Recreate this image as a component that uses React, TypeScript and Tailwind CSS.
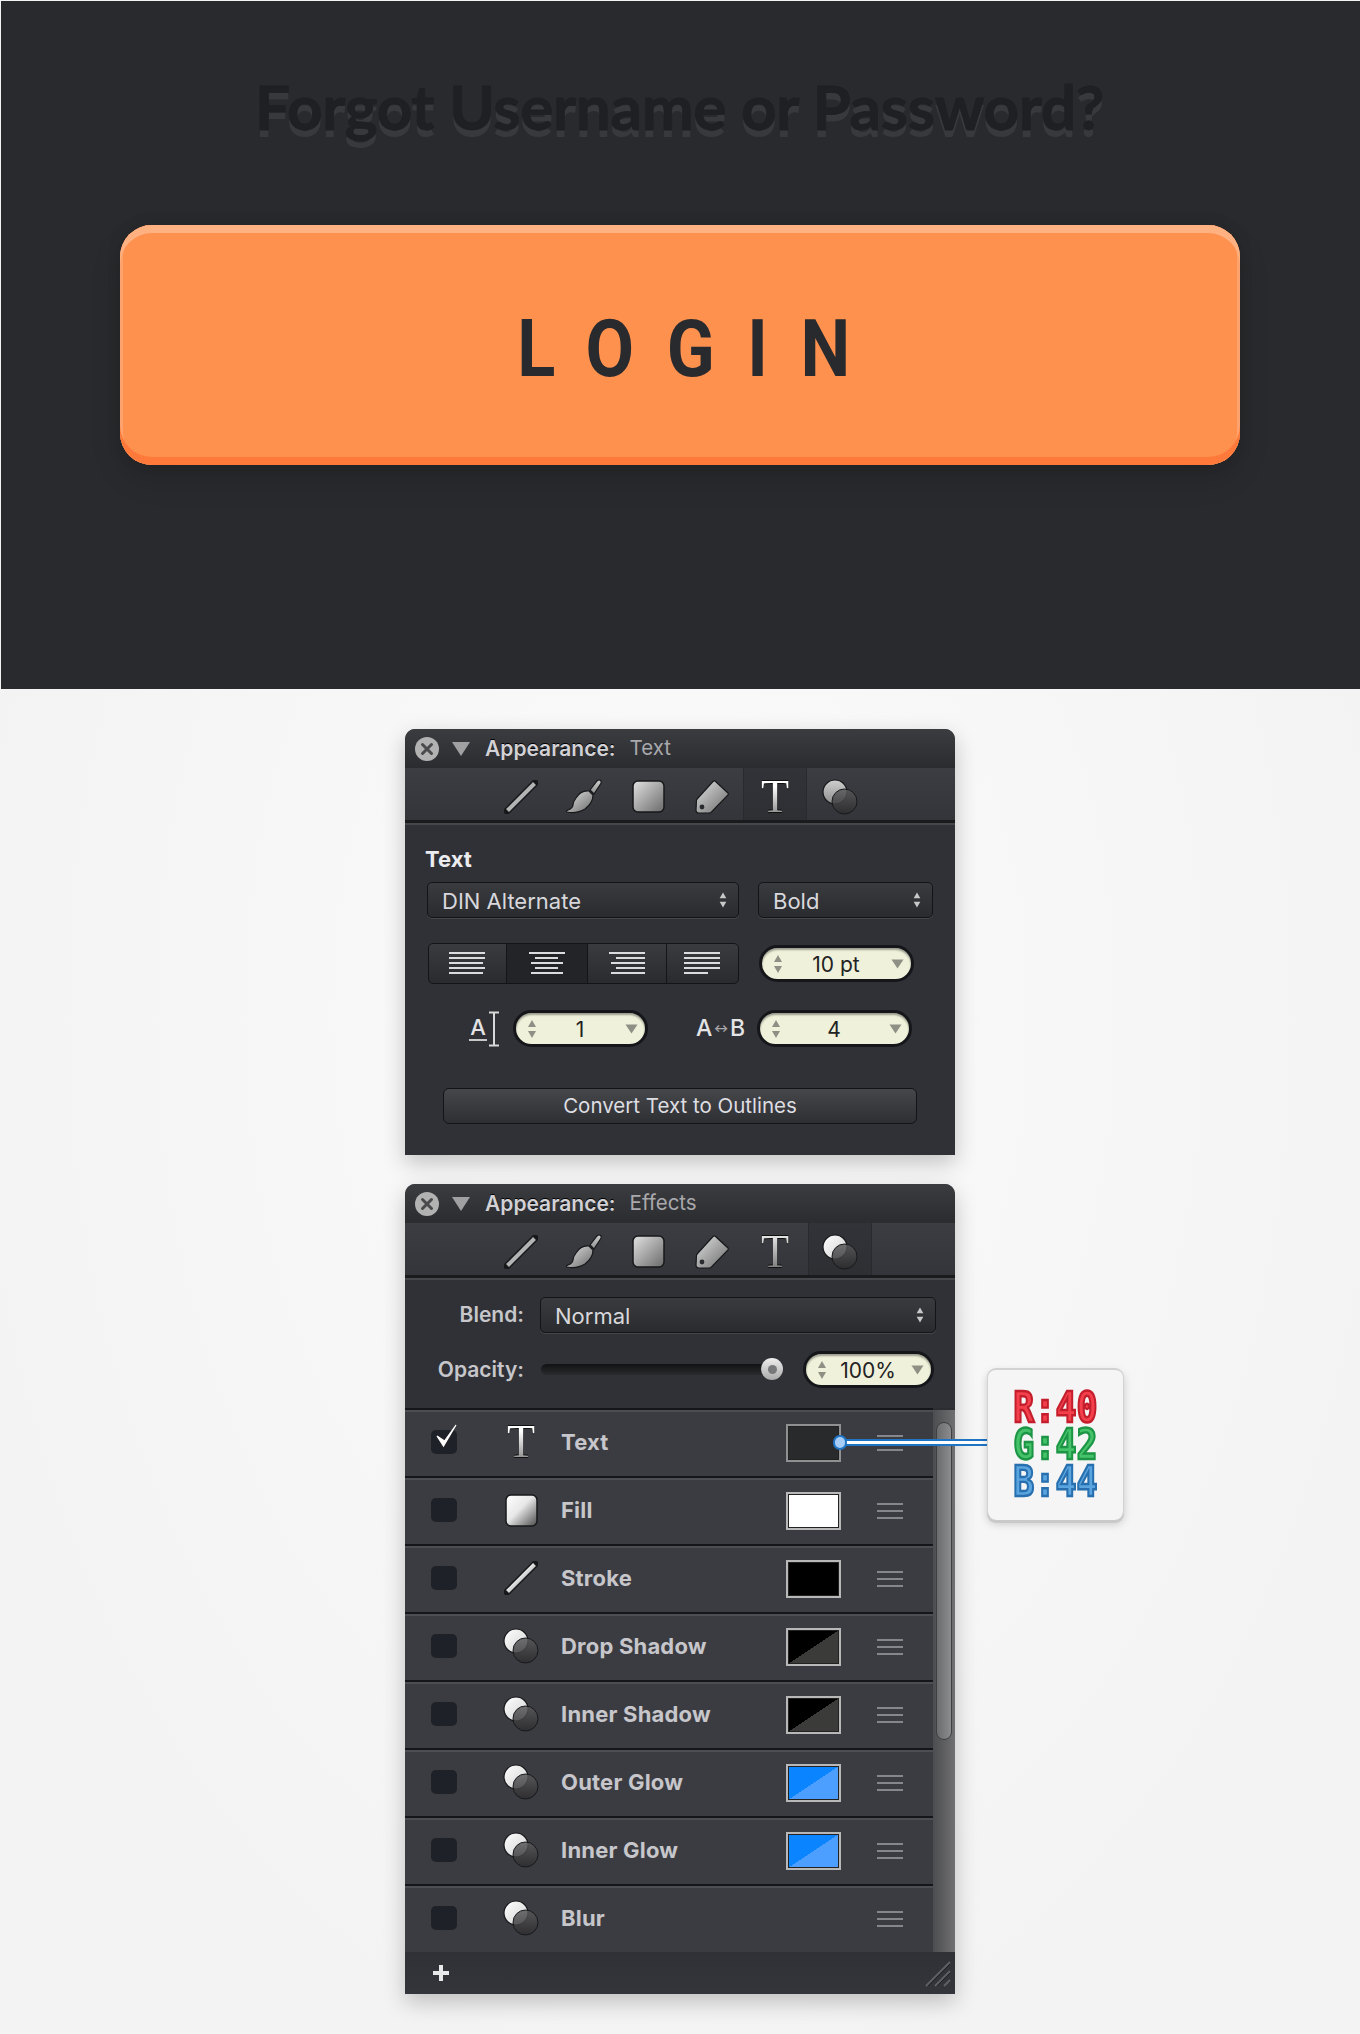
import React from "react";

const ui = "font-['Inter','Liberation_Sans',sans-serif]";

function Defs() {
  return (
    <svg className="absolute w-0 h-0">
      <defs>
        <linearGradient id="g1" x1="0" y1="0" x2="1" y2="1">
          <stop offset="0" stopColor="#e2e2e2" />
          <stop offset="1" stopColor="#6a6a6a" />
        </linearGradient>
        <linearGradient id="g2" x1="0" y1="0" x2="1" y2="1">
          <stop offset="0" stopColor="#ffffff" />
          <stop offset="0.45" stopColor="#e8e8e8" />
          <stop offset="1" stopColor="#4a4a4a" />
        </linearGradient>
        <linearGradient id="g3" x1="0" y1="0" x2="0" y2="1">
          <stop offset="0" stopColor="#cfcfcf" />
          <stop offset="1" stopColor="#8d8d8d" />
        </linearGradient>
        <linearGradient id="g4" x1="0" y1="0" x2="1" y2="1">
          <stop offset="0" stopColor="#ffffff" />
          <stop offset="1" stopColor="#d0d0d0" />
        </linearGradient>
        <linearGradient id="g5" x1="0" y1="0" x2="0" y2="1">
          <stop offset="0" stopColor="#5a5a5c" />
          <stop offset="1" stopColor="#2c2c2e" />
        </linearGradient>
      </defs>
    </svg>
  );
}

function LineIcon({ bright = false }: { bright?: boolean }) {
  return (
    <svg width="34" height="34" viewBox="0 0 34 34" className="block">
      <line x1="3" y1="31" x2="31" y2="3" stroke="#17181a" strokeWidth="7" strokeLinecap="round" />
      <line x1="3.5" y1="30.5" x2="30.5" y2="3.5" stroke={bright ? "url(#g2)" : "#b4b4b4"} strokeWidth="4" />
    </svg>
  );
}

function BrushIcon() {
  return (
    <svg width="36" height="36" viewBox="0 0 36 36" className="block">
      <path d="M24 11 L31 2 Q33 0 34.5 1.5 Q36 3 34.5 5 L28 15 Z" fill="url(#g3)" stroke="#17181a" strokeWidth="1.2" />
      <path d="M10 19 Q15 11 23 12 L27 16 Q27 24 19 30 Q11 35 1 33 Q-0.5 32 2 31 Q7 29 7 26 Q7 23 10 19Z" fill="url(#g1)" stroke="#17181a" strokeWidth="1.2" />
    </svg>
  );
}

function SquareIcon({ bright = false, w = 33 }: { bright?: boolean; w?: number }) {
  return (
    <svg width={w} height="33" viewBox={`0 0 ${w} 33`} className="block">
      <rect x="1" y="1" width={w - 2} height="31" rx="5" fill={bright ? "url(#g2)" : "url(#g1)"} stroke="#17181a" strokeWidth="1.5" />
    </svg>
  );
}

function TagIcon() {
  return (
    <svg width="34" height="34" viewBox="0 0 34 34" className="block">
      <path d="M20 1 L33 13 Q33.6 14 33 15 L16 32.5 Q15 33 14 33 L4 33 Q1 33 1 30 L1.5 20 Q2 19 3 18 L18 1.5 Q19 0.7 20 1Z" fill="url(#g1)" stroke="#17181a" strokeWidth="1.2" />
      <circle cx="7" cy="27" r="2.4" fill="#2a2b2e" />
    </svg>
  );
}

function TIcon({ bright = false }: { bright?: boolean }) {
  return (
    <span
      className={`block w-[32px] text-center font-['Liberation_Serif',serif] text-[46px] leading-[36px] bg-clip-text text-transparent [filter:drop-shadow(0_1px_0_#111)_drop-shadow(0_-1px_0_#111)] ${
        bright
          ? "bg-[linear-gradient(to_bottom,#ffffff_20%,#8a8a8a_100%)]"
          : "bg-[linear-gradient(to_bottom,#e0e0e0_10%,#777_100%)]"
      }`}
    >
      T
    </span>
  );
}

function CirclesIcon({ bright = false, size = 36 }: { bright?: boolean; size?: number }) {
  return (
    <svg width={size} height={size} viewBox="0 0 36 36" className="block">
      <circle cx="13" cy="13" r="12" fill={bright ? "url(#g4)" : "url(#g3)"} stroke="#17181a" strokeWidth="1.2" />
      <circle cx="22.5" cy="22.5" r="12.5" fill="url(#g5)" fillOpacity="0.85" stroke="#17181a" strokeWidth="1" />
    </svg>
  );
}

function Updown({ color = "#c8c8c8", small = false }: { color?: string; small?: boolean }) {
  return (
    <svg width={small ? 10 : 12} height={small ? 20 : 22} viewBox="0 0 12 22" className="block shrink-0">
      <path d="M6 2 L10 9 L2 9Z" fill={color} />
      <path d="M6 20 L10 13 L2 13Z" fill={color} />
    </svg>
  );
}

function TitleBar({ name }: { name: string }) {
  return (
    <div className="h-[39px] flex items-center bg-[linear-gradient(to_bottom,#3b3c40,#2b2c2f)] rounded-t-[10px] pl-[10px]">
      <div className="w-[24px] h-[24px] rounded-full bg-[#b2b2b2] flex items-center justify-center">
        <svg width="14" height="14" viewBox="0 0 14 14">
          <path d="M2.5 2.5 L11.5 11.5 M11.5 2.5 L2.5 11.5" stroke="#4a4a4c" strokeWidth="3" strokeLinecap="round" />
        </svg>
      </div>
      <svg width="18" height="16" viewBox="0 0 18 16" className="ml-[13px]">
        <path d="M0 1 L18 1 L9 15Z" fill="#a0a0a2" />
      </svg>
      <span className="ml-[15px] text-[21px] font-semibold text-[#d2d2d6] [text-shadow:0_-1px_0_#000]">Appearance:</span>
      <span className="ml-[14px] text-[20.5px] text-[#a9a9ad]">{name}</span>
    </div>
  );
}

function Toolbar({ active }: { active: "T" | "fx" }) {
  const tab = "w-[64px] h-full flex items-center justify-center pt-[5px]";
  const on = "bg-[linear-gradient(to_bottom,#323338,#2e2f33)] border-x border-[#292a2d]";
  return (
    <div className="h-[55px] flex bg-[linear-gradient(to_bottom,#3c3d42,#34353a)] border-b-[3px] border-[#1a1b1d] shadow-[0_2px_0_#46474b]">
      <div className="ml-[84px] flex items-center h-full">
        <div className="w-[64px] pt-[5px] flex justify-center"><LineIcon /></div>
        <div className="w-[62px] pt-[5px] flex justify-center"><BrushIcon /></div>
        <div className="w-[66px] pt-[5px] flex justify-center"><SquareIcon /></div>
        <div className="w-[62px] pt-[5px] flex justify-center"><TagIcon /></div>
        <div className={`${tab} ${active === "T" ? on : ""}`}><TIcon bright={active === "T"} /></div>
        <div className={`${tab} ml-px ${active === "fx" ? on : ""}`}><CirclesIcon bright={active === "fx"} /></div>
      </div>
    </div>
  );
}

function Select({ label, className = "" }: { label: string; className?: string }) {
  return (
    <div className={`h-[36px] flex items-center justify-between pl-[14px] pr-[10px] rounded-[5px] border border-[#131416] bg-[linear-gradient(to_bottom,#3a3b3f,#2a2b2e)] shadow-[0_1px_0_#46474b] ${className}`}>
      <span className="text-[22px] text-[#d8d8dc] leading-none pt-[2px]">{label}</span>
      <Updown small />
    </div>
  );
}

function Stepper({ value, className = "" }: { value: string; className?: string }) {
  return (
    <div className={`relative h-[37px] flex items-center rounded-full border-[3px] border-[#15161a] bg-[#eff1da] shadow-[inset_0_2px_2px_rgba(0,0,0,0.35)] pl-[10px] pr-[7px] ${className}`}>
      <Updown color="#8f9085" />
      <span className="flex-1 text-center text-[21px] text-[#222] leading-none pt-[1px] pr-[3px]">{value}</span>
      <svg width="13" height="10" viewBox="0 0 13 10" className="block shrink-0">
        <path d="M0.5 0.5 L12.5 0.5 L6.5 9.5Z" fill="#8f9085" />
      </svg>
    </div>
  );
}

const alignLines: Record<string, [number, number][]> = {
  left: [[0, 36], [0, 36], [0, 34], [0, 36], [0, 34]],
  center: [[1, 36], [7, 23], [3, 32], [7, 23], [3, 32]],
  right: [[0, 36], [7, 29], [2, 34], [7, 29], [2, 34]],
  just: [[0, 36], [0, 36], [0, 36], [0, 36], [0, 24]],
};

function AlignIcon({ kind }: { kind: string }) {
  return (
    <svg width="37" height="25" viewBox="0 0 37 25" className="block">
      {alignLines[kind].map(([x, w], i) => (
        <rect key={i} x={x} y={i * 5 + 1} width={w} height="2" fill="#dcdcde" />
      ))}
    </svg>
  );
}

function Segments() {
  const kinds = ["left", "center", "right", "just"];
  const widths = ["w-[78px]", "w-[82px]", "w-[80px]", "w-[71px]"];
  return (
    <div className="h-[41px] w-[311px] flex rounded-[5px] border border-[#131416] bg-[linear-gradient(to_bottom,#3a3b3f,#2a2b2e)] overflow-hidden">
      {kinds.map((k, i) => (
        <div
          key={k}
          className={`${widths[i]} flex items-center justify-center ${i < 3 ? "border-r border-[#141517]" : ""} ${i === 1 ? "bg-[#232427]" : ""}`}
        >
          <AlignIcon kind={k} />
        </div>
      ))}
    </div>
  );
}

function LeadingIcon() {
  return (
    <div className="w-[32px] h-[36px] flex items-center">
      <div className="flex flex-col items-center w-[20px]">
        <span className="text-[22px] leading-[23px] font-medium text-[#e4e4e6]">A</span>
        <div className="w-[18px] h-[2px] bg-[#c8c8c8]" />
      </div>
      <svg width="12" height="36" viewBox="0 0 12 36" className="block">
        <path d="M1 1.5 H11 M1 34.5 H11 M6 1.5 V34.5" stroke="#d8d8d8" strokeWidth="2" fill="none" />
      </svg>
    </div>
  );
}

function TextPanel() {
  return (
    <section className="w-[550px] ml-[405px] mt-[40px] rounded-t-[10px] bg-[#303136] shadow-[0_8px_22px_rgba(0,0,0,0.22)]">
      <TitleBar name="Text" />
      <Toolbar active="T" />
      <div className="pt-[24px] pb-[31px]">
        <div className="ml-[20px] text-[22px] leading-[24px] font-bold text-[#ececf0]">Text</div>
        <div className="mt-[11px] ml-[22px] flex gap-[19px]">
          <Select label="DIN Alternate" className="w-[312px]" />
          <Select label="Bold" className="w-[175px]" />
        </div>
        <div className="mt-[25px] ml-[23px] flex items-center gap-[20px]">
          <Segments />
          <Stepper value="10 pt" className="w-[155px]" />
        </div>
        <div className="mt-[26px] ml-[63px] flex items-center">
          <LeadingIcon />
          <Stepper value="1" className="ml-[13px] w-[135px] h-[37px]" />
          <div className="ml-[48px] w-[49px] flex items-center justify-between text-[23px] font-medium text-[#e4e4e6] leading-none">
            <span>A</span>
            <span className="text-[11px] font-bold text-[#a8a8aa]">↔</span>
            <span>B</span>
          </div>
          <Stepper value="4" className="ml-[12px] w-[155px]" />
        </div>
        <div className="mt-[41px] ml-[38px] w-[474px] h-[36px] flex items-center justify-center rounded-[6px] border border-[#131416] bg-[linear-gradient(to_bottom,#46474b,#2e2f33)] text-[20.5px] text-[#dedee2]">
          Convert Text to Outlines
        </div>
      </div>
    </section>
  );
}

type Row = { label: string; icon: React.ReactNode; swatch?: string; check?: boolean };

const half = (a: string, b: string) => ({ backgroundImage: `linear-gradient(to bottom right, ${a} 50%, ${b} 50%)` });

function Swatch({ kind }: { kind: string }) {
  const base = "w-[55px] h-[38px] border-2 shadow-[inset_0_0_0_1px_#222]";
  if (kind === "text") return <div className={`${base} border-[#909092] bg-[#292a2c]`} />;
  if (kind === "white") return <div className={`${base} border-[#b8b8b8] bg-white`} />;
  if (kind === "black") return <div className={`${base} border-[#b8b8b8] bg-black`} />;
  if (kind === "shadow") return <div className={`${base} border-[#b8b8b8]`} style={half("#000", "#3b3b39")} />;
  return <div className={`${base} border-[#b8b8b8]`} style={half("#0a84ff", "#4c9eff")} />;
}

const rows: Row[] = [
  { label: "Text", icon: <TIcon bright />, swatch: "text", check: true },
  { label: "Fill", icon: <SquareIcon bright />, swatch: "white" },
  { label: "Stroke", icon: <LineIcon bright />, swatch: "black" },
  { label: "Drop Shadow", icon: <CirclesIcon bright />, swatch: "shadow" },
  { label: "Inner Shadow", icon: <CirclesIcon bright />, swatch: "shadow" },
  { label: "Outer Glow", icon: <CirclesIcon bright />, swatch: "blue" },
  { label: "Inner Glow", icon: <CirclesIcon bright />, swatch: "blue" },
  { label: "Blur", icon: <CirclesIcon bright /> },
];

function EffectRow({ row }: { row: Row }) {
  return (
    <div className="h-[68px] flex items-center bg-[#3b3c41] border-t-2 border-[#15161a] shadow-[inset_0_2px_0_#4d4e53] pl-[26px] pr-[30px]">
      <div className="relative w-[26px] h-[24px] rounded-[5px] bg-[#1f2128] -mt-[2px]">
        {row.check && (
          <svg width="24" height="32" viewBox="0 0 24 32" className="absolute left-[3px] top-[-9px]">
            <path d="M3 15 L9.5 25 L22 4 L10.5 20 Z" fill="#fff" stroke="#fff" strokeWidth="1.2" />
          </svg>
        )}
      </div>
      <div className="ml-[46px] w-[36px] flex justify-center -mt-[2px]">{row.icon}</div>
      <span className="ml-[22px] flex-1 text-[22px] font-bold tracking-[0.2px] text-[#c6c6cb] -mt-[2px]">{row.label}</span>
      {row.swatch && <Swatch kind={row.swatch} />}
      <div className="ml-[36px] w-[26px] flex flex-col gap-[5px]">
        <div className="h-[2px] bg-[#87878b]" />
        <div className="h-[2px] bg-[#87878b]" />
        <div className="h-[2px] bg-[#87878b]" />
      </div>
    </div>
  );
}

function EffectsPanel() {
  return (
    <section className="w-[550px] ml-[405px] mt-[29px] rounded-t-[10px] bg-[#303136] shadow-[0_8px_22px_rgba(0,0,0,0.22)]">
      <TitleBar name="Effects" />
      <Toolbar active="fx" />
      <div className="pt-[19px] pb-[20px]">
        <div className="flex items-center">
          <span className="w-[119px] text-right text-[21px] font-semibold text-[#c6c6cb]">Blend:</span>
          <Select label="Normal" className="ml-[16px] w-[396px]" />
        </div>
        <div className="mt-[18px] flex items-center">
          <span className="w-[119px] text-right text-[21px] font-semibold text-[#c6c6cb]">Opacity:</span>
          <div className="relative ml-[17px] w-[242px] h-[11px] rounded-full bg-[linear-gradient(to_bottom,#111214,#2a2b2d)]">
            <div className="absolute right-0 top-[-6px] w-[22px] h-[22px] rounded-full bg-[linear-gradient(to_bottom,#eee,#aaa)] flex items-center justify-center">
              <div className="w-[9px] h-[9px] rounded-full bg-[#77787a]" />
            </div>
          </div>
          <Stepper value="100%" className="ml-[20px] w-[131px] h-[37px]" />
        </div>
      </div>
      <div className="flex">
        <div className="w-[528px]">
          {rows.map((r) => (
            <EffectRow key={r.label} row={r} />
          ))}
        </div>
        <div className="w-[22px] pt-[12px] bg-[linear-gradient(to_right,#4c4d50,#707072)] border-t-2 border-[#2c2d30]">
          <div className="ml-[3px] w-[16px] h-[318px] rounded-full bg-[linear-gradient(to_right,#6b6c6e,#8c8c8e)] border border-[#3f4042]" />
        </div>
      </div>
      <div className="h-[42px] flex items-center justify-between bg-[linear-gradient(to_bottom,#303136,#34353a)] pl-[28px] pr-[4px]">
        <svg width="16" height="16" viewBox="0 0 16 16">
          <path d="M8 0 V16 M0 8 H16" stroke="#e8e8ea" strokeWidth="4" />
        </svg>
        <svg width="26" height="26" viewBox="0 0 26 26" className="mt-[2px]">
          <path d="M1 25 L25 1 M10 25 L25 10 M19 25 L25 19" stroke="#5e5f63" strokeWidth="2" />
          <path d="M3 25 L25 3 M12 25 L25 12" stroke="#1e1f22" strokeWidth="1" />
        </svg>
      </div>
    </section>
  );
}

function Callout() {
  const mono = "font-['DejaVu_Sans_Mono',monospace] font-bold";
  return (
    <>
      <div className="absolute left-[846px] top-[1439px] w-[141px] h-[7px] bg-white border-y-2 border-[#1f74c4]" />
      <div className="absolute left-[833px] top-[1435px] w-[14px] h-[15px] rounded-full bg-[#a5cdf7] border-2 border-[#1f74c4]" />
      <div className="absolute left-[987px] top-[1368px] w-[137px] h-[152px] rounded-[9px] bg-[#f5f5f5] border-t-2 border-x border-[#d2d2d2] shadow-[0_3px_0_#c9c9c9,0_4px_8px_rgba(0,0,0,0.18)] flex flex-col items-center justify-center">
        <div className="scale-y-[1.2] text-[35px] leading-[31px]">
          <div className={`${mono} text-[#f4404c] [-webkit-text-stroke:2px_#c41e2d]`}>R:40</div>
          <div className={`${mono} text-[#46c36a] [-webkit-text-stroke:2px_#1c9545]`}>G:42</div>
          <div className={`${mono} text-[#5aa5df] [-webkit-text-stroke:2px_#276fae]`}>B:44</div>
        </div>
      </div>
    </>
  );
}

export default function App() {
  return (
    <div className={`relative w-[1360px] h-[2034px] overflow-hidden bg-[radial-gradient(ellipse_at_50%_50%,#f9f9f9_20%,#f3f3f3_75%)] ${ui}`}>
      <Defs />
      <header className="h-[688px] ml-px mt-px bg-[#292a2d] flex flex-col items-center">
        <h1 className="mt-[67px] mr-[2px] font-['Lato',sans-serif] font-bold text-[62px] leading-[76px] tracking-[-0.3px] text-[#1f2023] [-webkit-text-stroke:0.8px_#1f2023] [text-shadow:0_7px_0_#38393d]">
          Forgot Username or Password?
        </h1>
        <div className="mt-[81px] mr-[2px] w-[1120px] h-[240px] rounded-[32px] bg-[#ff914f] shadow-[inset_0_8px_0_#ffb182,inset_0_-8px_0_#ff7a3a,inset_3px_0_0_#ffa36e,inset_-3px_0_0_#ffa36e,0_14px_30px_rgba(0,0,0,0.14),0_-2px_14px_rgba(0,0,0,0.1)] flex items-center justify-center">
          <span className="font-['Roboto',sans-serif] font-bold text-[80px] leading-none tracking-[37px] text-[#292a2d] scale-x-[0.88] pl-[46px] pt-[8px]">
            LOGIN
          </span>
        </div>
      </header>
      <TextPanel />
      <EffectsPanel />
      <Callout />
    </div>
  );
}
